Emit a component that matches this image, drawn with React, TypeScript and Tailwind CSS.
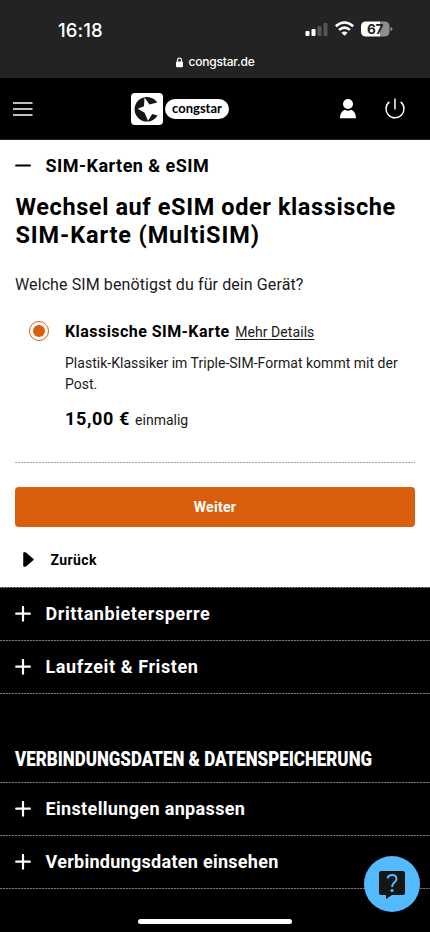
import React from "react";

const DASH_DARK = "bg-[repeating-linear-gradient(90deg,#777_0_2px,#222_2px_3px)]";
const DASH_LIGHT = "bg-[repeating-linear-gradient(90deg,#aaa_0_2px,#eee_2px_3px)]";

function Plus() {
  return (
    <svg width="16" height="16" viewBox="0 0 16 16" className="shrink-0">
      <path d="M1.200 7.700H14.900M8 1V14.700" stroke="#fff" strokeWidth="2.200" strokeLinecap="round" />
    </svg>
  );
}

function Row({ label, tracking }: { label: string; tracking: string }) {
  return (
    <div className="h-[53px] flex flex-col">
      <div className="flex-1 flex items-center gap-[14.5px] pl-[15px]">
        <Plus />
        <span className={`text-[18px] leading-6 font-bold whitespace-nowrap ${tracking}`}>{label}</span>
      </div>
      <div className={`h-px w-full ${DASH_DARK}`} />
    </div>
  );
}

function StatusBar() {
  return (
    <div className="h-[78px] bg-[#232323] text-white font-['Inter',sans-serif]">
      <div className="h-[50px] pt-[16px] pl-[58px] pr-[37px] flex items-center justify-between">
        <span className="text-[18.500px] leading-6 font-medium mt-[-6px] tracking-[0.1px]">16:18</span>
        <div className="flex items-center mt-[-8px]">
          <svg width="88" height="18" viewBox="0 0 88 18">
            <rect x="0.5" y="11" width="4" height="5" rx="1" fill="#fff" />
            <rect x="6.5" y="9" width="4" height="7" rx="1" fill="#fff" />
            <rect x="12.5" y="6" width="4" height="10" rx="1" fill="#555" />
            <rect x="18.5" y="3" width="4" height="13" rx="1" fill="#555" />
            <g fill="none" stroke="#fff" strokeWidth="2.5">
              <path d="M30.800 6.300Q39.500 -1.200 48.200 6.300" />
              <path d="M34 9.900Q39.500 5.300 45 9.900" />
            </g>
            <path d="M36.400 12.700Q39.500 10.200 42.600 12.700L39.500 15.800Z" fill="#fff" />
            <path d="M61 1.500H75V16.500H61Q56 16.500 56 11.500V6.500Q56 1.500 61 1.500Z" fill="#fff" />
            <path d="M75 1.500H79.500Q84.500 1.500 84.500 6.500V11.500Q84.500 16.500 79.500 16.500H75Z" fill="#8e8e8e" />
            <path d="M85.500 6.700Q87.500 7.500 87.500 9T85.500 11.300Z" fill="#8e8e8e" />
            <text x="70" y="13.900" textAnchor="middle" fontFamily="Inter" fontWeight="700" fontSize="13.500" letterSpacing="-0.3" fill="#232323">67</text>
          </svg>
        </div>
      </div>
      <div className="flex items-center justify-center gap-[5px] h-6 pl-px">
        <svg width="7" height="11" viewBox="0 0 7 11">
          <path d="M1.500 5V3.200A2 2.200 0 0 1 5.500 3.200V5" fill="none" stroke="#fff" strokeWidth="1.100" />
          <rect x="0" y="4.500" width="7" height="5.700" rx="1" fill="#fff" />
        </svg>
        <span className="text-[12px] leading-4 font-medium tracking-[-0.2px]">congstar.de</span>
      </div>
    </div>
  );
}

function Header() {
  return (
    <header className="h-[62px] bg-black flex items-center pl-[13px] pr-[25px] border-b border-[#222]">
      <svg width="20" height="14" viewBox="0 0 20 14">
        <path d="M0 1H19.500M0 7H19.500M0 13H19.500" stroke="#fff" strokeWidth="1.500" />
      </svg>
      <div className="flex items-center gap-[2px] ml-[98px]">
        <svg width="32" height="32" viewBox="0 0 32 32">
          <rect width="32" height="32" rx="4" fill="#fff" />
          <circle cx="15.900" cy="16.200" r="12.300" fill="#161616" />
          <path d="M13.500 4.500L18.500 11.600L30 8.500V23.500L21.200 21L17 27.800L13.600 19.800L6.700 15.700L13 13.200Z" fill="#fff" />
        </svg>
        <div className="h-5 w-16 rounded-full bg-white text-black flex items-center justify-center">
          <span className="font-['Lato',sans-serif] text-[13px] leading-4 font-bold -mt-0.5">congstar</span>
        </div>
      </div>
      <div className="ml-auto flex items-center gap-[29px]">
        <svg width="17" height="20" viewBox="0 0 17 20" className="translate-x-[0.5px]">
          <circle cx="8.500" cy="5" r="5" fill="#fff" />
          <path d="M.5 19.200C.5 14.500 3 11.500 5.500 10.800Q8.500 12.500 11.500 10.800C14 11.500 16.500 14.500 16.500 19.200Z" fill="#fff" />
        </svg>
        <svg width="20" height="20" viewBox="0 0 20 20" fill="none" stroke="#fff" strokeWidth="1.500" className="overflow-visible">
          <path d="M10 -.5V10.500M4.300 2.800A9 9 0 1 0 15.700 2.800" />
        </svg>
      </div>
    </header>
  );
}

export default function App() {
  return (
    <div className="relative w-[430px] h-[932px] overflow-hidden bg-black text-white font-['Roboto',sans-serif]">
      <StatusBar />
      <Header />
      <main className="h-[447px] bg-white text-black flex flex-col px-[15px] pt-[14px]">
        <div className="flex items-center gap-[14.5px] h-6">
          <svg width="16" height="4" viewBox="0 0 16 4">
            <path d="M1.200 1.500H14.900" stroke="#000" strokeWidth="2.200" strokeLinecap="round" />
          </svg>
          <span className="text-[18px] leading-6 font-bold tracking-[0.47px]">SIM-Karten &amp; eSIM</span>
        </div>
        <h1 className="mt-[15px] pl-[0.5px] text-[23.500px] leading-7 font-bold tracking-[0.6px] whitespace-nowrap">
          Wechsel auf eSIM oder klassische
          <br />
          <span className="tracking-[0.87px]">SIM-Karte (MultiSIM)</span>
        </h1>
        <p className="mt-6 text-[16px] leading-6 text-[#1a1a1a] tracking-[0.1px]">Welche SIM benötigst du für dein Gerät?</p>
        <div className="mt-[24px] flex">
          <div className="ml-[14px] mr-4 w-5 h-5 shrink-0 rounded-full border border-[#d95f0e] flex items-center justify-center">
            <div className="w-3 h-3 rounded-full bg-[#d95f0e]" />
          </div>
          <div className="whitespace-nowrap">
            <div className="flex items-baseline gap-[5.5px] h-6 -mt-[1px]">
              <span className="text-[16px] leading-6 font-bold tracking-[0.45px]">Klassische SIM-Karte</span>
              <span className="text-[14px] leading-6 text-[#1a1a1a] underline underline-offset-2 tracking-[0.07px]">Mehr Details</span>
            </div>
            <p className="mt-[9px] text-[14px] leading-[21px] text-[#1a1a1a] tracking-[0.02px]">
              Plastik-Klassiker im Triple-SIM-Format kommt mit der
              <br />
              Post.
            </p>
            <div className="mt-3 flex items-baseline gap-[5px] h-6">
              <span className="text-[18px] leading-6 font-bold tracking-[0.65px]">15,00 €</span>
              <span className="text-[14px] leading-6 text-[#1a1a1a]">einmalig</span>
            </div>
          </div>
        </div>
        <div className={`mt-[31px] h-px shrink-0 ${DASH_LIGHT}`} />
        <button className="mt-6 h-10 shrink-0 rounded-[4px] bg-[#d95f0e] text-white text-[14px] font-bold tracking-[0.3px]">Weiter</button>
        <div className="mt-[21px] flex items-center h-6">
          <svg width="11" height="15" viewBox="0 0 11 15" className="ml-2 -mt-[2px]">
            <path d="M1 1H2.500L10 7.500L2.500 14H1Z" stroke="#000" strokeWidth="1.500" strokeLinejoin="round" />
          </svg>
          <span className="ml-[16.5px] text-[14px] leading-6 font-bold tracking-[0.4px]">Zurück</span>
        </div>
      </main>
      <div className={`h-px ${DASH_DARK}`} />
      <Row label="Drittanbietersperre" tracking="tracking-[0.58px]" />
      <Row label="Laufzeit & Fristen" tracking="tracking-[0.58px]" />
      <div className="h-[88px] pt-[53px] pl-[15px]">
        <h2 className="w-max origin-left scale-x-[0.847] text-[20px] leading-6 font-black whitespace-nowrap">
          VERBINDUNGSDATEN &amp; DATENSPEICHERUNG
        </h2>
      </div>
      <div className={`h-px ${DASH_DARK}`} />
      <Row label="Einstellungen anpassen" tracking="tracking-[0.35px]" />
      <Row label="Verbindungsdaten einsehen" tracking="tracking-[0.28px]" />
      <div className="absolute left-[138px] top-[919px] w-[154px] h-[5px] rounded-full bg-white" />
      <button className="absolute left-[364px] top-[856px] w-14 h-14 rounded-full bg-[#55b9ff] flex items-center justify-center">
        <svg width="26" height="28" viewBox="0 0 26 28" className="mt-[2px]">
          <path d="M2 0H24Q26 0 26 2V22Q26 24 24 24H13L7 28V24H2Q0 24 0 22V2Q0 0 2 0Z" fill="#161616" />
          <path d="M8.700 7.500C9 2.800 17.500 2.500 17.500 8C17.500 11.500 13 11.200 13 16" fill="none" stroke="#55b9ff" strokeWidth="2" />
          <circle cx="13" cy="19.500" r="1.600" fill="#55b9ff" />
        </svg>
      </button>
    </div>
  );
}
